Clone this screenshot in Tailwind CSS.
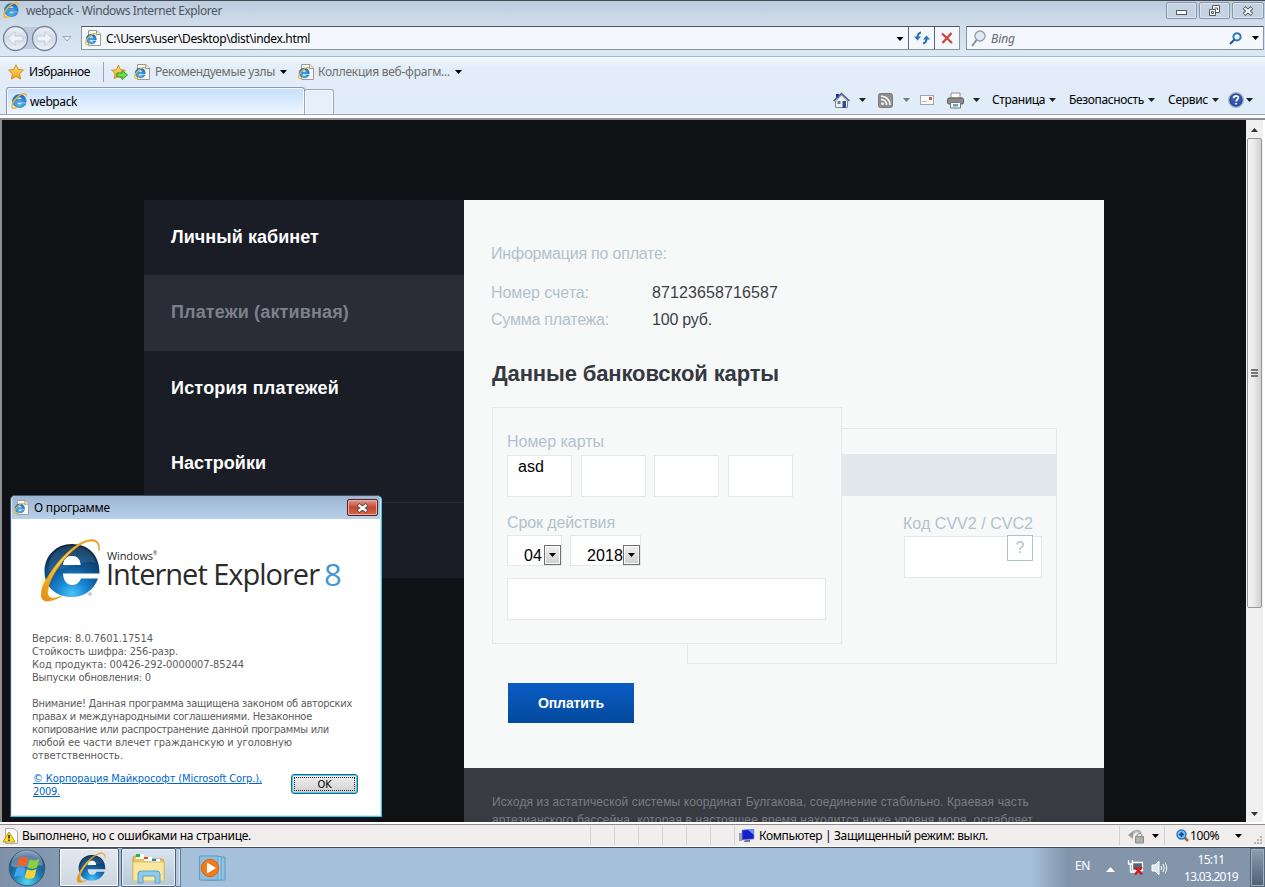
<!DOCTYPE html>
<html lang="ru">
<head>
<meta charset="utf-8">
<title>webpack - Windows Internet Explorer</title>
<script src="https://cdn.jsdelivr.net/npm/@tailwindcss/browser@4"></script>
</head>
<body class="w-[1265px] h-[887px] overflow-hidden relative flex flex-col bg-[#e3edf9] font-['Noto_Sans','Open_Sans',sans-serif] text-[12px] leading-4 text-black">

<!-- shared symbols -->
<svg width="0" height="0" class="absolute">
  <defs>
    <radialGradient id="ball" cx=".5" cy=".95" r=".95"><stop offset="0" stop-color="#4fc4f5"/><stop offset=".25" stop-color="#1c8fdb"/><stop offset=".55" stop-color="#0f5796"/><stop offset=".8" stop-color="#0d3c66"/><stop offset="1" stop-color="#0b2238"/></radialGradient>
    <radialGradient id="ball2" cx=".5" cy=".7" r=".8"><stop offset="0" stop-color="#58c8f8"/><stop offset=".6" stop-color="#2488d8"/><stop offset="1" stop-color="#1a5aa8"/></radialGradient>
    <linearGradient id="gold" x1="0" y1="1" x2="1" y2="0"><stop offset="0" stop-color="#e08a10"/><stop offset=".5" stop-color="#ffcf3a"/><stop offset="1" stop-color="#e8960f"/></linearGradient>
    <linearGradient id="starg" x1="0" y1="0" x2="0" y2="1"><stop offset="0" stop-color="#ffe98a"/><stop offset="1" stop-color="#f59a13"/></linearGradient>
    <linearGradient id="grey" x1="0" y1="0" x2="0" y2="1"><stop offset="0" stop-color="#eef2f7"/><stop offset=".5" stop-color="#d3dbe6"/><stop offset="1" stop-color="#eef4fa"/></linearGradient>
    <radialGradient id="orb" cx=".5" cy=".9" r=".9"><stop offset="0" stop-color="#4fd6f2"/><stop offset=".45" stop-color="#1d7bb0"/><stop offset=".8" stop-color="#23527e"/><stop offset="1" stop-color="#6d8fb0"/></radialGradient>
    <symbol id="e" viewBox="0 0 64 66">
      <path d="M61.5 35.5C62 17 50 6 34 6C18 6 6.500 18 6.500 33C6.500 49 18 59 34 59C46 59 56 52 60 40.500L43 40.500C41 45 38 47 34 47C29 47 25.500 43 25 35.500ZM25 27C26 21 29 18 34 18C39 18 42 21 42.500 27Z" fill="url(#ball)"/>
      <path d="M12 22C17 10 27 7.500 34 7.500C46 7.500 55 14 58 25C45 20 25 34 10 33Z" fill="#7fb4d8" opacity=".18"/>
      <path d="M25 27C26 21 29 18 34 18C39 18 42 21 42.500 27Z" fill="#fff"/>
      <path d="M61 13C63 3 57 0 48 2.500C31 8 10 34 4.500 50C0 64 8 67 24 58C14 62 8 61 10 50C13 36 32 10 48 4C57 1 61 4 61 13Z" fill="url(#gold)" stroke="#e39a1a" stroke-width=".7"/>
    </symbol>
    <symbol id="es" viewBox="0 0 64 66">
      <path d="M61.500 38C62 17 50 6 34 6C18 6 5 18 5 33C5 49 18 60 34 60C46 60 56 54 60 44L43 44C41 48 38 49 34 49C29 49 24 46 23 38ZM23 27C24 20 29 17 34 17C39 17 43 20 44.500 27Z" fill="url(#ball2)" stroke="#1b5fae" stroke-width="2"/>
      <path d="M62 14C62 0 50 1 42 6C24 14 6 36 3 50C0 66 12 66 26 58" fill="none" stroke="#f2b422" stroke-width="6"/>
    </symbol>
    <symbol id="pg" viewBox="0 0 16 16">
      <path d="M3.500.5H12L15.500 4V15.500H3.500Z" fill="#fafafa" stroke="#9a9a9a"/><path d="M11.500.5V4.500H15.500" fill="#e8e8e8" stroke="#9a9a9a"/>
      <use href="#es" x="0" y="3" width="12" height="12"/>
    </symbol>
    <symbol id="dn" viewBox="0 0 7 4"><path d="M0 0H7L3.500 4Z" fill="currentColor"/></symbol>
    <symbol id="star" viewBox="0 0 16 16"><path d="M8 .8L10.200 5.500L15.400 6.100L11.600 9.800L12.600 15L8 12.400L3.400 15L4.400 9.800L.6 6.100L5.800 5.500Z" fill="url(#starg)" stroke="#d98a16"/></symbol>
  </defs>
</svg>

<!-- title bar -->
<div class="h-[22px] shrink-0 flex items-start border-t border-[#47494f] bg-gradient-to-b from-[#bccbdd] to-[#cfdcea]">
  <svg class="w-4 h-4 ml-[3px] mt-[1px]"><use href="#es"/></svg>
  <span class="ml-[7px] mt-[2px] text-[#4f565f]" data-w="196">webpack - Windows Internet Explorer</span>
  <div class="ml-auto flex gap-[2px] mt-[1px] mr-px">
    <div class="w-[31px] h-[17px] border border-[#8595ab] rounded-[2px] bg-[#c5d2e2] shadow-[inset_0_0_0_1px_#dbe4ee] grid place-items-center"><div class="w-[11px] h-[5px] mt-1 border border-[#545a64] bg-white"></div></div>
    <div class="w-[31px] h-[17px] border border-[#8595ab] rounded-[2px] bg-[#c5d2e2] shadow-[inset_0_0_0_1px_#dbe4ee] grid place-items-center"><svg width="13" height="12" fill="#fff" stroke="#545a64"><path d="M4.500.5H11.500V7.500H4.500Z"/><path d="M6.500 3H9.500V5"/><path d="M1.500 4.500H7.500V10.500H1.500Z"/><path d="M3.500 6.500H5.500V8.500H3.500Z"/></svg></div>
    <div class="w-[32px] h-[17px] border border-[#8595ab] rounded-[2px] bg-[#c5d2e2] shadow-[inset_0_0_0_1px_#dbe4ee] grid place-items-center"><svg width="12" height="10"><path d="M2 1.500L10 8.500M10 1.500L2 8.500" stroke="#545a64" stroke-width="4"/><path d="M2.500 2L9.500 8M9.500 2L2.500 8" stroke="#fff" stroke-width="2"/></svg></div>
  </div>
</div>

<!-- address row -->
<div class="h-[35px] shrink-0 flex items-start bg-gradient-to-b from-[#cfdcea] to-[#dce8f5] border-b border-[#a9b9cd]">
  <svg class="ml-[2px] mt-[2px]" width="74" height="29">
    <rect x="6" y="3" width="46" height="22" rx="11" fill="#bccadb"/>
    <circle cx="13.500" cy="14.500" r="12" fill="url(#grey)" stroke="#75869b" stroke-width="1.300"/><circle cx="42.500" cy="14.500" r="12" fill="url(#grey)" stroke="#75869b" stroke-width="1.300"/>
    <path d="M6 14.500L13 7.500V12H21V17H13V21.500Z" fill="#eff3f8" stroke="#c3cdd9"/><path d="M50 14.500L43 7.500V12H35V17H43V21.500Z" fill="#eff3f8" stroke="#c3cdd9"/>
    <path d="M61 12.500H69L65 17Z" fill="#e8eef5" stroke="#98a7b8"/>
  </svg>
  <div class="ml-[5px] mt-[4px] w-[879px] h-[24px] border border-[#8895a5] border-t-[#4f5964] bg-[#f4f8fc] flex items-center">
    <svg class="w-4 h-4 ml-[3px]"><use href="#pg"/></svg>
    <span class="ml-[5px] mt-px" data-w="204">C:\Users\user\Desktop\dist\index.html</span>
    <svg class="ml-auto mr-[4px] w-2 h-1 mt-px"><use href="#dn"/></svg>
    <div class="w-[26px] h-full border-l border-[#5d6874] grid place-items-center"><svg width="16" height="14" fill="none" stroke="#2572b8" stroke-width="2"><path d="M7 1.500C4 2 3.500 4 3.500 7"/><path d="M9 12.500C12 12 12.500 10 12.500 7"/><path d="M0 5.500H7L3.500 9.500ZM9 8.500H16L12.500 4.500Z" fill="#2572b8" stroke="none"/></svg></div>
    <div class="w-[25px] h-full border-l border-[#5d6874] grid place-items-center"><svg width="12" height="12"><path d="M1 1.500L11 11M10.500 1L1.500 11" stroke="#d2403d" stroke-width="2.200"/></svg></div>
  </div>
  <div class="ml-[6px] mt-[4px] w-[298px] h-[24px] border border-[#8895a5] border-t-[#4f5964] bg-[#f4f8fc] flex items-center">
    <svg class="ml-1" width="15" height="17"><circle cx="9" cy="6" r="5" fill="#dfeaf3" stroke="#8f9dab" stroke-width="1.300"/><path d="M5.500 10L1 16" stroke="#8a8f96" stroke-width="2"/></svg>
    <span class="ml-[5px] mt-px italic text-[#63676c]" data-w="24">Bing</span>
    <svg class="ml-auto" width="13" height="13"><circle cx="8" cy="4.800" r="3.600" fill="none" stroke="#2878be" stroke-width="2"/><path d="M5.500 7.500L1 12" stroke="#1f5d9b" stroke-width="2.200"/></svg>
    <svg class="w-[7px] h-1 ml-[10px] mr-[4px]"><use href="#dn"/></svg>
  </div>
</div>

<!-- favourites and tabs -->
<div class="h-[58px] shrink-0 flex bg-gradient-to-b from-[#f1f6fd] via-[#e3edf9] via-20% to-[#e0ecf9] border-b border-[#98a6b8]">
  <div class="flex flex-col">
    <div class="h-[31px] flex items-center">
      <svg class="w-4 h-4 ml-[8px]"><use href="#star"/></svg>
      <span class="ml-[5px]" data-w="61">Избранное</span>
      <div class="w-px h-5 ml-[13px] bg-[#9aa5b2]"></div>
      <svg width="17" height="17" class="ml-[7px]"><use href="#star" width="15" height="16"/><path d="M6 9H11V6.500L16.500 11L11 15.500V13H6Z" fill="#6fdb4a" stroke="#2c9a22"/></svg>
      <svg class="w-4 h-4 ml-[6px]"><use href="#pg"/></svg>
      <span class="ml-[5px] text-[#6d6d6d]" data-w="120">Рекомендуемые узлы</span>
      <svg class="w-[7px] h-1 ml-[5px]"><use href="#dn"/></svg>
      <svg class="w-4 h-4 ml-[11px]"><use href="#pg"/></svg>
      <span class="ml-[4px] text-[#6d6d6d]" data-w="132">Коллекция веб-фрагм...</span>
      <svg class="w-[7px] h-1 ml-[5px]"><use href="#dn"/></svg>
    </div>
    <div class="flex items-end ml-[6px] h-[27px]">
      <div class="w-[299px] h-[27px] rounded-t-[3px] border border-b-0 border-[#8e9cae] shadow-[inset_0_0_0_1px_#f4f9ff] bg-gradient-to-b from-[#c5defb] to-[#eef6ff] flex items-center">
        <svg class="w-4 h-4 ml-[4px]"><use href="#es"/></svg><span class="ml-[3px] mt-[2px]" data-w="47">webpack</span>
      </div>
      <div class="w-[30px] h-[25px] -ml-px rounded-t-[3px] border border-b-0 border-[#9aa7b8] bg-[#e6f0fb] shadow-[inset_0_0_0_1px_#f4f9ff]"></div>
    </div>
  </div>
  <div class="ml-auto mr-[12px] mt-[33px] h-5 flex items-center text-[#222]">
    <svg width="17" height="17"><path d="M3 2H6V6H3Z" fill="#1a1fd0"/><path d="M2.500 9V15.500H14.500V9L8.500 3Z" fill="#eef1f6" stroke="#7b8597"/><path d="M.5 9L8.500 1.500L16.500 9" fill="none" stroke="#4c5a80" stroke-width="1.500"/><path d="M9.500 9H13V16H9.500Z" fill="#2d4f9a"/><path d="M4.500 9H7.500V12H4.500Z" fill="#6f7a8c"/></svg>
    <svg class="w-[7px] h-1 ml-[9px]"><use href="#dn"/></svg>
    <svg class="ml-[12px]" width="15" height="15"><rect x=".5" y=".5" width="14" height="14" rx="2" fill="#8f8f8f" stroke="#7a7a7a"/><circle cx="4.500" cy="10.800" r="1.300" fill="#fff"/><path d="M3 6.500A5 5 0 0 1 8.500 12M3 3.200A8.500 8.500 0 0 1 12 12" fill="none" stroke="#fff" stroke-width="1.500"/></svg>
    <svg class="w-[7px] h-1 ml-[10px] text-[#777]"><use href="#dn"/></svg>
    <svg class="ml-[10px]" width="14" height="10"><rect x=".5" y=".5" width="13" height="9" fill="#fafafa" stroke="#a4a4a4"/><path d="M9 2H12V5H9Z" fill="#d9534a"/><path d="M2 6.500H7" stroke="#bbb"/></svg>
    <svg class="ml-[13px]" width="17" height="17"><path d="M4 1H13V6H4Z" fill="#fff" stroke="#8e8e8e"/><rect x=".5" y="6" width="16" height="6" rx="1.500" fill="#8a8a8a" stroke="#5a5a5a"/><path d="M3.500 10.500H13.500V16H3.500Z" fill="#f4f4f4" stroke="#777"/><path d="M6 12H11V14.500H6Z" fill="#58a8d0"/></svg>
    <svg class="w-[7px] h-1 ml-[9px]"><use href="#dn"/></svg>
    <span class="ml-[12px] text-black" data-w="53">Страница</span><svg class="w-[7px] h-1 ml-[4px]"><use href="#dn"/></svg>
    <span class="ml-[13px] text-black" data-w="75">Безопасность</span><svg class="w-[7px] h-1 ml-[4px]"><use href="#dn"/></svg>
    <span class="ml-[13px] text-black" data-w="40">Сервис</span><svg class="w-[7px] h-1 ml-[4px]"><use href="#dn"/></svg>
    <svg class="ml-[9px]" width="16" height="16"><circle cx="8" cy="8" r="7.300" fill="#3557b0" stroke="#a9b4c6" stroke-width="1.400"/><circle cx="8" cy="8" r="6" fill="none" stroke="#24418f"/><path d="M5.600 6.200C5.600 3 10.600 3.200 10.300 6C10.200 7.600 8.200 7.500 8.100 9.500M8.100 11V12.600" fill="none" stroke="#fff" stroke-width="1.700"/></svg>
    <svg class="w-[7px] h-1 ml-[2px]"><use href="#dn"/></svg>
  </div>
</div>

<!-- viewport -->
<div class="h-[709px] shrink-0 pt-[3px] bg-white">
<div class="h-[704px] flex border-t-2 border-l-2 border-[#8b8d90]">
  <main class="w-[1244px] h-[702px] bg-[#101115] pl-[142px] pt-[80px] overflow-hidden flex items-start font-['Liberation_Sans',Arial,sans-serif]">
    <nav class="w-[320px] h-[378px] bg-[#1a1d25] text-[18px] leading-[22px] font-bold text-white flex flex-col">
      <a class="h-[75px] pl-[27px] pt-[26px]"><span data-w="148">Личный кабинет</span></a>
      <a class="h-[76px] pl-[27px] pt-[26px] bg-[#2a2c37] text-[#7d818b]"><span data-w="178">Платежи (активная)</span></a>
      <a class="h-[76px] pl-[27px] pt-[26px]"><span data-w="168">История платежей</span></a>
      <a class="h-[75px] pl-[27px] pt-[25px]"><span data-w="95">Настройки</span></a>
      <a class="h-[76px] border-t border-[#2a2c37]"></a>
    </nav>
    <section class="w-[640px] h-[622px] bg-[#f7f9f9] flex flex-col text-[16px] leading-[20px] text-[#b0c2cc]">
      <div class="h-[568px] shrink-0 pl-[27px] pt-[44px]">
        <p><span data-w="176">Информация по оплате:</span></p>
        <div class="flex mt-[19px]"><span class="w-[161px]"><span data-w="98">Номер счета:</span></span><span class="text-[#3c3f48]" data-w="126">87123658716587</span></div>
        <div class="flex mt-[7px]"><span class="w-[161px]"><span data-w="118">Сумма платежа:</span></span><span class="text-[#3c3f48]" data-w="60">100 руб.</span></div>
        <h1 class="mt-[30px] h-[28px] ml-px text-[22px] leading-[28px] font-bold text-[#353840]"><span data-w="287">Данные банковской карты</span></h1>
        <!-- both sides of the card -->
        <div class="relative ml-px mt-[19px] h-[257px] w-[565px]">
          <div class="absolute left-[195px] top-[21px] w-[370px] h-[236px] border border-[#e3e8ec] flex flex-col">
            <div class="mt-[25px] h-[42px] bg-[#e3e8ec]"></div>
            <div class="ml-[215px] mt-[18px]"><span data-w="130">Код CVV2 / CVC2</span></div>
            <div class="ml-[216px] mt-[2px] relative w-[138px] h-[42px] bg-white border border-[#e3e8ec]">
              <div class="absolute left-[102px] -top-[2px] w-[26px] h-[26px] border border-[#b0c2cc] bg-[#fdfefe] text-center leading-[24px]">?</div>
            </div>
          </div>
          <div class="absolute left-0 top-0 w-[350px] h-[237px] border border-[#e3e8ec] bg-[#f7f9f9] pl-[14px] pt-[24px]">
            <div class="h-[23px]"><span data-w="97">Номер карты</span></div>
            <div class="flex text-black">
              <div class="w-[65px] h-[42px] border border-[#e3e8ec] bg-white pl-[10px] pt-px"><span data-w="26">asd</span></div>
              <div class="w-[65px] h-[42px] border border-[#e3e8ec] bg-white ml-[9px]"></div>
              <div class="w-[65px] h-[42px] border border-[#e3e8ec] bg-white ml-[8px]"></div>
              <div class="w-[65px] h-[42px] border border-[#e3e8ec] bg-white ml-[9px]"></div>
            </div>
            <div class="mt-[16px] h-[22px]"><span data-w="108">Срок действия</span></div>
            <div class="flex gap-[8px] text-black">
              <div class="w-[55px] h-[31px] border border-[#e3e8ec] bg-white flex items-end justify-end"><span class="mr-[2px] -mb-px" data-w="18">04</span>
                <div class="w-[17px] h-[20px] border border-[#707070] bg-gradient-to-b from-[#f2f2f2] to-[#cfcfcf] shadow-[inset_0_0_0_1px_#fafafa] grid place-items-center"><svg class="w-[7px] h-1"><use href="#dn"/></svg></div></div>
              <div class="w-[71px] h-[31px] border border-[#e3e8ec] bg-white flex items-end justify-end"><span class="-mb-px" data-w="36">2018</span>
                <div class="w-[17px] h-[20px] border border-[#707070] bg-gradient-to-b from-[#f2f2f2] to-[#cfcfcf] shadow-[inset_0_0_0_1px_#fafafa] grid place-items-center"><svg class="w-[7px] h-1"><use href="#dn"/></svg></div></div>
            </div>
            <div class="mt-[12px] w-[319px] h-[42px] border border-[#e3e8ec] bg-white"></div>
          </div>
        </div>
        <button class="block mt-[19px] ml-[17px] w-[126px] h-[40px] bg-gradient-to-b from-[#0a5cc4] to-[#034a9c] text-white font-bold text-[14px] leading-[40px]"><span data-w="66">Оплатить</span></button>
      </div>
      <footer class="h-[54px] overflow-hidden bg-[#383b42] pl-[28px] pt-[25px] text-[12px] leading-[18px] text-[#7b7e85]">
        <span data-w="537">Исходя из астатической системы координат Булгакова, соединение стабильно. Краевая часть</span><br>
        <span data-w="541">артезианского бассейна, которая в настоящее время находится ниже уровня моря, ослабляет</span>
      </footer>
    </section>
  </main>
  <div class="w-[17px] h-[702px] bg-[#f0f0f0] flex flex-col items-center pt-[8px] text-[#333]">
    <svg width="7" height="4"><path d="M0 4H7L3.500 0Z" fill="currentColor"/></svg>
    <div class="mt-[6px] w-[15px] h-[470px] rounded-[2px] border border-[#979797] bg-gradient-to-r from-[#f5f5f5] via-[#e8e8e8] to-[#cfcfcf] flex flex-col items-center justify-center gap-px">
      <i class="w-[7px] h-[2px] bg-[#777]"></i><i class="w-[7px] h-[2px] bg-[#777]"></i><i class="w-[7px] h-[2px] bg-[#777]"></i>
    </div>
    <svg class="w-[7px] h-1 mt-auto mb-[6px]"><use href="#dn"/></svg>
  </div>
</div>
</div>

<!-- status bar -->
<div class="h-[23px] shrink-0 bg-[#f1eded] border-t border-[#8c8c8c] border-b border-b-white flex items-center">
  <svg class="ml-[3px]" width="15" height="16"><path d="M2.500.5H11L14.500 4V15.500H2.500Z" fill="#fafafa" stroke="#aaa"/><path d="M6 4L12 14H0Z" fill="#ffe11a" stroke="#b99a10"/><path d="M6 7V10.500M6 11.500V13" stroke="#222" stroke-width="1.500"/></svg>
  <span class="ml-[4px] mt-px" data-w="229">Выполнено, но с ошибками на странице.</span>
  <div class="ml-[339px] h-[19px] flex gap-[23px]"><i class="w-px bg-[#d3d0d0]"></i><i class="w-px bg-[#d3d0d0]"></i><i class="w-px bg-[#d3d0d0]"></i><i class="w-px bg-[#d3d0d0]"></i><i class="w-px bg-[#d3d0d0]"></i><i class="w-px bg-[#d3d0d0]"></i><i class="w-px bg-[#d3d0d0]"></i></div>
  <svg class="ml-[4px]" width="16" height="14"><path d="M0 4H3V12H0Z" fill="#9aa0a8"/><path d="M3 1L15 0V10L3 11Z" fill="#1420c8" stroke="#8fa0d8" stroke-width=".6"/><path d="M9 1L15 0V6Z" fill="#6f8df0"/><path d="M7 11H11V13H5V12Z" fill="#777"/></svg>
  <span class="ml-[4px] mt-px" data-w="229">Компьютер | Защищенный режим: выкл.</span>
  <i class="ml-[131px] w-px h-[19px] bg-[#d3d0d0]"></i>
  <svg class="ml-[8px]" width="17" height="16"><path d="M4 8A5 5 0 0 1 13 5" fill="none" stroke="#b4b4b4" stroke-width="2.500"/><path d="M0 7L5 3V11Z" fill="#9a9a9a"/><path d="M9 9V7.500C9 5 14 5 14 7.500V9" fill="none" stroke="#777"/><path d="M7.500 8.500H15.500V15H7.500Z" fill="#b0b0b0" stroke="#8c8c8c"/></svg>
  <svg class="w-[7px] h-1 ml-[7px]"><use href="#dn"/></svg>
  <i class="ml-[5px] w-px h-[19px] bg-[#d3d0d0]"></i>
  <svg class="ml-[11px]" width="13" height="13"><path d="M8 8L12 12" stroke="#9a6c3a" stroke-width="2.500"/><circle cx="5.500" cy="5.500" r="4.500" fill="#7fc0f5" stroke="#2c74c4" stroke-width="1.400"/><path d="M5.500 3V8M3 5.500H8" stroke="#123f8c" stroke-width="1.600"/></svg>
  <span class="ml-[1px]" data-w="29">100%</span>
  <svg class="w-[7px] h-1 ml-[16px]"><use href="#dn"/></svg>
  <svg class="ml-[12px] mt-[9px]" width="9" height="9" fill="#b7b3b3"><path d="M6 0h2v2h-2zM3 3h2v2h-2zM6 3h2v2h-2zM0 6h2v2h-2zM3 6h2v2h-2zM6 6h2v2h-2z"/></svg>
</div>

<!-- taskbar -->
<div class="h-[40px] shrink-0 border-t border-[#3e4c5c] bg-[#a6c0dc] flex">
  <div class="w-[59px] bg-gradient-to-r from-[#7e91a8] to-[#8499b2] pl-[8px] pt-[1px]">
    <svg width="38" height="38" viewBox="0 0 38 38"><circle cx="19" cy="19" r="17.800" fill="url(#orb)" stroke="#2c4c6b" stroke-width=".8"/><path d="M3 17A16 16 0 0 1 35 17C26 14 12 22 3 17Z" fill="#fff" opacity=".28"/>
      <g transform="translate(19 19) scale(1.12) translate(-18 -19)"><path d="M11 10.500C14 8.500 16.500 9 19 10.500L17 18C14.500 16.500 12 16.500 9 18Z" fill="#f0602a"/><path d="M20.500 11.300C23 12.800 26 12.500 29 11L27 18.500C24 20 21 20 18.500 18.500Z" fill="#8fce3c"/><path d="M8.500 19.500C11.500 18 14 18 16.500 19.500L14.500 27C12 25.500 9.500 25.500 6.500 27Z" fill="#45a5ee"/><path d="M18 20.200C20.500 21.700 23.500 21.500 26.500 20L24.500 27.500C21.500 29 18.500 29 16 27.500Z" fill="#fcd23a"/></g></svg>
  </div>
  <div class="w-[60px] border border-[#4e5f73] rounded-[2px] bg-gradient-to-b from-[#e3e8ee] to-[#cdd6e0] shadow-[inset_0_0_0_1px_#fff] pl-[15px] pt-[3px]"><svg width="32" height="32"><use href="#e"/></svg></div>
  <div class="ml-[2px] w-[55px] border border-[#4e5f73] rounded-[2px] bg-gradient-to-b from-[#d9e3ee] to-[#b7c9dc] shadow-[inset_0_0_0_1px_#e9f1fa] pl-[10px] pt-[5px]">
    <svg width="33" height="30"><path d="M1 4Q1 2 3 2H9L11 5H29Q32 5 32 8V25H1Z" fill="#e5c667" stroke="#c39d3c"/><path d="M4 0H12V5H4Z" fill="#fff"/><path d="M4 0H8V3H4Z" fill="#2bb53a"/><path d="M12 3H20V7H12Z" fill="#fff"/><path d="M12 3H16V5H12Z" fill="#d84a2a"/><path d="M20 5H28V8H20Z" fill="#fff"/><path d="M20 5H24V7H20Z" fill="#2a7ad8"/><path d="M1 8H32V27H1Z" fill="#f8e7a0" stroke="#dcc06a"/><path d="M6 29V20Q6 17 9 17H25Q28 17 28 20V29H23V22H11V29Z" fill="#8fcbe8" stroke="#5aa3c8"/></svg>
  </div>
  <div class="w-[5px] border border-l-0 border-[#65788d] bg-[#b4c8de] shadow-[inset_-1px_0_0_0_#dce8f4]"></div>
  <svg class="ml-[18px] mt-[7px]" width="30" height="27"><path d="M8 2H26V25H8Z" fill="#8fc2de" stroke="#5f9cc0"/><path d="M4 1.500H22V25H4Z" fill="#a5d2ea" stroke="#5f9cc0"/><path d="M.5 1H19V25H.5Z" fill="#8cc0dd" stroke="#5f9cc0"/><circle cx="11" cy="13" r="8.700" fill="#f27a1e" stroke="#d9600f"/><path d="M8 7.500L17 13L8 18.500Z" fill="#fff"/></svg>
  <div class="ml-auto w-[234px] flex items-center text-white bg-gradient-to-r from-[#a6c0dc] to-[#8295ab] to-15%">
    <span class="ml-[44px] -mt-1" data-w="15">EN</span>
    <svg class="ml-[16px] mt-[3px]" width="9" height="5"><path d="M0 5H9L4.500 0Z" fill="#fff"/></svg>
    <svg class="ml-[12px]" width="18" height="17"><path d="M5.500 3.500H15.500V11.500H5.500Z" fill="#566579" stroke="#fff" stroke-width="1.300"/><path d="M1.500 1V5H5.500V1M3.500 5V13H9" fill="none" stroke="#fff" stroke-width="1.300"/><path d="M8 8L15 15.500M15 8L8 15.500" stroke="#d8141c" stroke-width="2.300"/></svg>
    <svg class="ml-[6px]" width="17" height="16" fill="none" stroke="#fff"><path d="M1 5H4L8 1V15L4 11H1Z" fill="#dfe5ec"/><path d="M10 6Q11.500 8 10 10M12 4Q14.500 8 12 12M14 2.500Q17.500 8 14 13.500"/></svg>
    <div class="ml-auto mr-[11px] w-[56px] flex flex-col items-center leading-[17px] mt-px"><span data-w="27">15:11</span><span data-w="54">13.03.2019</span></div>
    <div class="w-[15px] h-full border border-[#54657a] bg-gradient-to-b from-[#8d9fb2] to-[#4d6077] shadow-[inset_0_0_0_1px_#9fb0c2]"></div>
  </div>
</div>

<!-- about dialog, floats over the page -->
<div class="absolute left-[10px] top-[495px] w-[372px] h-[322px] rounded-t-[5px] border border-[#3f5468] border-b-[#35c8ea] border-r-[#35c8ea] bg-[#b5cee8] p-px pt-0 flex flex-col shadow-[inset_0_0_0_1px_#d8e8f6]">
  <div class="h-[23px] shrink-0 flex items-center rounded-t-[4px] bg-gradient-to-b from-[#9cb6d2] to-[#b9d0ea]">
    <svg class="w-[15px] h-[15px] ml-[2px]"><use href="#pg"/></svg>
    <span class="ml-[5px]" data-w="76">О программе</span>
    <div class="ml-auto mr-[2px] w-[31px] h-[17px] rounded-[2px] border border-[#5b1d1d] bg-gradient-to-b from-[#dd9a8c] via-[#c4452c] via-50% to-[#cf6a4e] shadow-[inset_0_0_0_1px_#e6b0a5] grid place-items-center"><svg width="13" height="10"><path d="M2 1.500L11 8.500M11 1.500L2 8.500" stroke="#554a55" stroke-width="4"/><path d="M2.500 2L10.500 8M10.500 2L2.500 8" stroke="#fff" stroke-width="2.200"/></svg></div>
  </div>
  <div class="flex-1 bg-white text-[#5c5c5c] font-['DejaVu_Sans_Condensed','DejaVu_Sans',sans-serif] text-[11px] leading-[13px] flex flex-col pl-[20px]">
    <div class="flex h-[113px] pt-[19px] pl-[6px] font-['Open_Sans','Noto_Sans',sans-serif] text-[#2a2a2a]">
      <svg class="shrink-0" width="64" height="66"><path d="M3 52Q2 38 18 24L26 34Q16 44 8 58Z" fill="#e9efa0" opacity=".7"/><use href="#e"/><circle cx="52" cy="56" r="1.300" fill="none" stroke="#777" stroke-width=".6"/></svg>
      <div class="pt-[11px] pl-[4px]">
        <div class="text-[11px] leading-[14px] flex pl-px"><span data-w="46">Windows</span><span class="text-[5px] leading-[9px]">®</span></div>
        <div class="text-[29px] leading-[24px] flex items-center -mt-px"><span data-w="213">Internet Explorer</span><span class="ml-[5px] text-[#3f97d3] text-[31px]" data-w="15">8</span></div>
      </div>
    </div>
    <p><span data-w="121">Версия: 8.0.7601.17514</span></p>
    <p><span data-w="146">Стойкость шифра: 256-разр.</span></p>
    <p><span data-w="212">Код продукта: 00426-292-0000007-85244</span></p>
    <p><span data-w="119">Выпуски обновления: 0</span></p>
    <p class="mt-[13px]"><span data-w="320">Внимание! Данная программа защищена законом об авторских</span></p>
    <p><span data-w="280">правах и международными соглашениями. Незаконное</span></p>
    <p><span data-w="297">копирование или распространение данной программы или</span></p>
    <p><span data-w="260">любой ее части влечет гражданскую и уголовную</span></p>
    <p><span data-w="91">ответственность.</span></p>
    <div class="flex mt-[10px] ml-px text-[#0066cc]">
      <div class="w-[258px] underline"><span data-w="229">© Корпорация Майкрософт (Microsoft Corp.),</span><br><span data-w="27">2009.</span></div>
      <div class="mt-[2px] w-[67px] h-[20px] rounded-[3px] border border-[#2c628b] bg-gradient-to-b from-[#f2f2f2] to-[#cfcfcf] shadow-[inset_0_0_0_1px_#43d3f3] p-[2px] text-black"><div class="h-[14px] border border-dotted border-[#222] flex items-center justify-center"><span data-w="14">OK</span></div></div>
    </div>
  </div>
</div>

<script>
  // Spread each label's letters so the line fills its nominal width.
  function fitLabels() {
    document.querySelectorAll('[data-w]').forEach(function (el) {
      el.style.whiteSpace = 'nowrap';
      el.style.letterSpacing = '0px';
      var r = document.createRange();
      r.selectNodeContents(el);
      var gap = (Number(el.dataset.w) - r.getBoundingClientRect().width) / el.textContent.length;
      el.style.letterSpacing = gap.toFixed(3) + 'px';
    });
  }
  window.addEventListener('load', function () {
    fitLabels();
    document.fonts.ready.then(fitLabels);
    requestAnimationFrame(fitLabels);
  });
</script>
</body>
</html>
